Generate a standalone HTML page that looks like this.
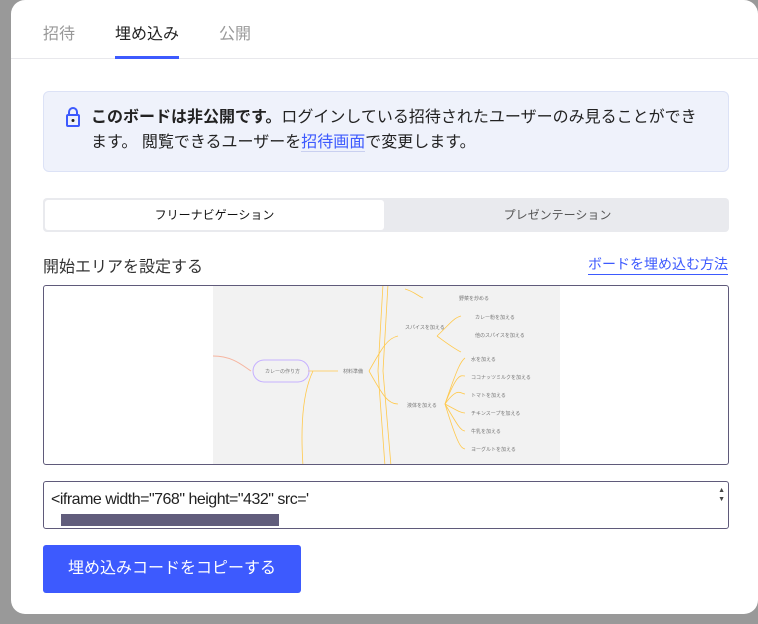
<!DOCTYPE html><html><head><meta charset="utf-8"><style>
*{box-sizing:border-box;margin:0;padding:0}
body{width:758px;height:624px;background:#999;position:relative;overflow:hidden;font-family:"Liberation Sans","Noto Sans CJK JP",sans-serif;color:#222}
.modal{position:absolute;left:11px;top:0;width:747px;height:614px;background:#fff;border-radius:14px}
.tab{position:absolute;top:20px;font-size:16px;color:#999}
.line{position:absolute;left:0;right:0;top:58px;height:1px;background:#e8e8ec}
.ul{position:absolute;left:104px;top:56px;width:64px;height:3px;background:#3d5afe}
.info{position:absolute;left:32px;top:91px;width:686px;height:81px;background:#eff2fb;border:1px solid #dce2f6;border-radius:6px;font-size:16px;line-height:25px;padding:13px 28px 0 47px;color:#222}
.seg{position:absolute;left:32px;top:198px;width:686px;height:34px;background:#e9eaee;border-radius:4px}
.seg .a{position:absolute;left:2px;top:2px;width:339px;height:30px;background:#fff;border-radius:3px;text-align:center;line-height:30px;font-size:12px;color:#111}
.seg .b{position:absolute;left:343px;top:0;width:343px;text-align:center;line-height:34px;font-size:12px;color:#555}
.prev{position:absolute;left:32px;top:285px;width:686px;height:180px;border:1px solid #5f5a7a;border-radius:3px;overflow:hidden}
.img{position:absolute;left:169px;top:0;width:347px;height:180px;background:#f2f2f2;font-size:5px;color:#777}
.img span{position:absolute;white-space:nowrap}
.ta{position:absolute;left:32px;top:481px;width:686px;height:48px;border:1px solid #5f5a7a;border-radius:3px;overflow:hidden}
.btn{position:absolute;left:32px;top:545px;width:258px;height:48px;background:#3d5afe;border-radius:3px;color:#fff;font-size:16px;text-align:center;line-height:48px}
</style></head><body>
<div class="modal">
<div class="tab" style="left:32px">招待</div>
<div class="tab" style="left:104px;color:#222">埋め込み</div>
<div class="tab" style="left:208px">公開</div>
<div class="line"></div><div class="ul"></div>
<div class="info">
<svg style="position:absolute;left:22px;top:15px" width="14" height="20" viewBox="0 0 14 20"><path d="M3 8V5a4 4 0 0 1 8 0v3" fill="none" stroke="#3d5afe" stroke-width="2"/><rect x="1" y="8" width="12" height="11" rx="1" fill="none" stroke="#3d5afe" stroke-width="2"/><circle cx="7" cy="13.5" r="1.5" fill="#222"/></svg>
<b>このボードは非公開です。</b>ログインしている招待されたユーザーのみ見ることができます。 閲覧できるユーザーを<span style="color:#3d5afe;border-bottom:1px solid #c9d0f0">招待画面</span>で変更します。</div>
<div class="seg"><div class="a">フリーナビゲーション</div><div class="b">プレゼンテーション</div></div>
<div style="position:absolute;left:32px;top:253px;font-size:16px;color:#333">開始エリアを設定する</div>
<div style="position:absolute;right:30px;top:255px;font-size:14px;color:#3d5afe;border-bottom:1px solid #3d5afe;line-height:19px">ボードを埋め込む方法</div>
<div class="prev"><div class="img">
<svg width="347" height="180" style="position:absolute;left:0;top:0"><g fill="none" stroke="#ffc94d" stroke-width="0.8"><path d="M175 -2 L170 85 L178 180"/><path d="M170 -2 L165 85 L172 180"/><path d="M156 85 C170 60 175 52 185 50"/><path d="M156 85 C170 110 175 118 185 118"/><path d="M224 50 C235 40 240 32 248 30"/><path d="M224 50 C235 58 240 62 248 66"/><path d="M232 118 C245 80 248 75 252 72"/><path d="M232 118 C245 85 248 90 252 90"/><path d="M232 118 C245 100 248 108 252 108"/><path d="M232 118 C245 125 248 127 252 127"/><path d="M232 118 C245 140 248 145 252 145"/><path d="M232 118 C245 160 248 162 252 163"/><path d="M95 85 L125 85"/><path d="M100 85 C88 110 88 150 90 180"/><path d="M192 3 C200 5 205 10 210 12"/></g><path d="M0 70 C20 70 30 80 38 85" stroke="#f6b5a0" fill="none"/><rect x="40" y="74" width="56" height="22" rx="11" fill="none" stroke="#c6b1ff"/></svg>
<span style="left:246px;top:9px">野菜を炒める</span>
<span style="left:192px;top:38px">スパイスを加える</span>
<span style="left:262px;top:28px">カレー粉を加える</span>
<span style="left:262px;top:46px">他のスパイスを加える</span>
<span style="left:52px;top:82px">カレーの作り方</span>
<span style="left:130px;top:82px">材料準備</span>
<span style="left:194px;top:116px">液体を加える</span>
<span style="left:258px;top:70px">水を加える</span>
<span style="left:258px;top:88px">ココナッツミルクを加える</span>
<span style="left:258px;top:106px">トマトを加える</span>
<span style="left:258px;top:124px">チキンスープを加える</span>
<span style="left:258px;top:142px">牛乳を加える</span>
<span style="left:258px;top:160px">ヨーグルトを加える</span>
</div></div>
<div class="ta"><div style="position:absolute;left:7px;top:9px;font-size:16px;color:#222;letter-spacing:-0.5px">&lt;iframe width="768" height="432" src='</div>
<div style="position:absolute;left:17px;top:32px;width:218px;height:12px;background:#615d7c"></div>
<div style="position:absolute;right:3px;top:4px;font-size:7px;color:#444;line-height:9px">▲<br>▼</div></div>
<div class="btn">埋め込みコードをコピーする</div>
</div>
</body></html>
